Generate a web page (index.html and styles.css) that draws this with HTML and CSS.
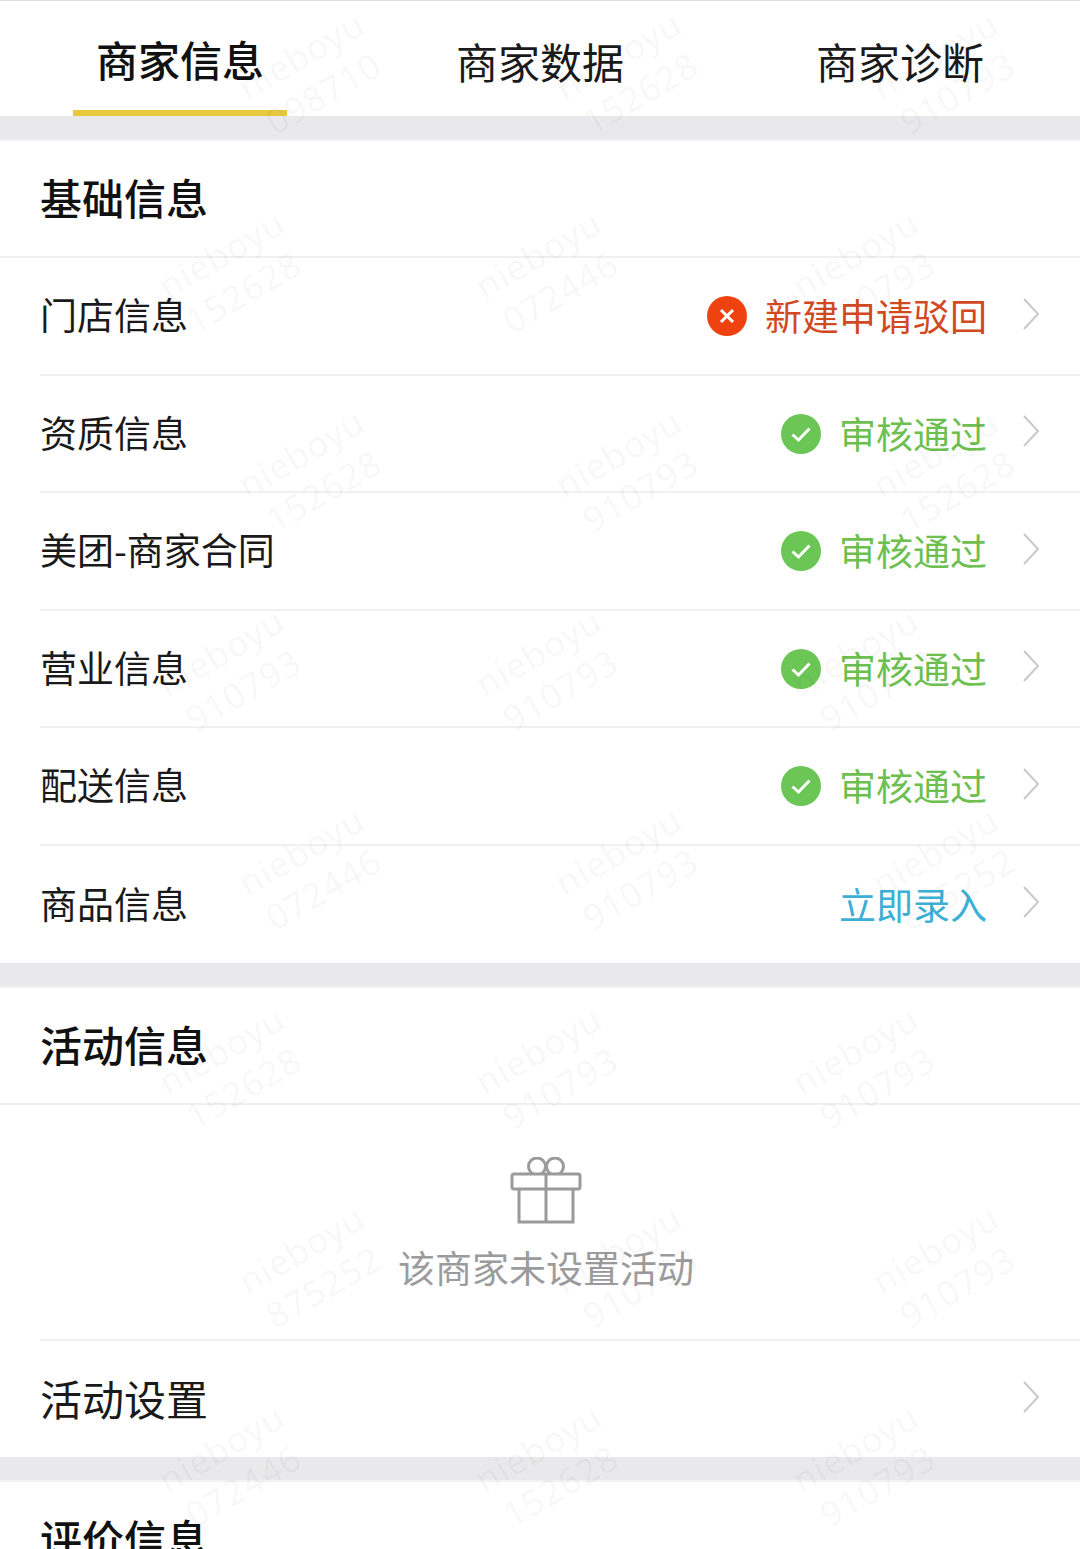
FILE: index.html
```html
<!DOCTYPE html>
<html lang="zh-CN">
  <head>
    <meta charset="UTF-8" />
    <meta name="viewport" content="width=device-width, initial-scale=1.0" />
    <title>商家信息</title>
    <link rel="stylesheet" href="styles.css">
  </head>
  <body>
    <svg display="none">
      <symbol id="chevron" viewBox="0 0 18 34">
        <path d="M2 2 L16 17 L2 32" fill="none" stroke="#c9c9cd" stroke-width="2"></path>
      </symbol>
      <symbol id="ok" viewBox="0 0 40 40">
        <circle cx="20" cy="20" r="20" fill="#6cc655"></circle>
        <path d="M11.5 20.5 L17.5 26 L28.5 14.5" fill="none" stroke="#fff" stroke-width="3"></path>
      </symbol>
      <symbol id="fail" viewBox="0 0 40 40">
        <circle cx="20" cy="20" r="20" fill="#ee4310"></circle>
        <path d="M14 14 L26 26 M26 14 L14 26" fill="none" stroke="#fff" stroke-width="3"></path>
      </symbol>
    </svg>

    <div class="page">
      <!-- tabs -->
      <div class="tabs">
        <div class="tab tab-active">商家信息</div>
        <div class="tab">商家数据</div>
        <div class="tab">商家诊断</div>
      </div>

      <!-- 基础信息 -->
      <div class="section">
        <div class="section-title">基础信息</div>
        <div class="row">
          <div class="row-label">门店信息</div>
          <svg class="status-icon"><use href="#fail"></use></svg>
          <div class="status status-red">新建申请驳回</div>
          <svg class="chevron"><use href="#chevron"></use></svg>
        </div>
        <div class="row">
          <div class="row-label">资质信息</div>
          <svg class="status-icon"><use href="#ok"></use></svg>
          <div class="status status-green">审核通过</div>
          <svg class="chevron"><use href="#chevron"></use></svg>
        </div>
        <div class="row">
          <div class="row-label">美团-商家合同</div>
          <svg class="status-icon"><use href="#ok"></use></svg>
          <div class="status status-green">审核通过</div>
          <svg class="chevron"><use href="#chevron"></use></svg>
        </div>
        <div class="row">
          <div class="row-label">营业信息</div>
          <svg class="status-icon"><use href="#ok"></use></svg>
          <div class="status status-green">审核通过</div>
          <svg class="chevron"><use href="#chevron"></use></svg>
        </div>
        <div class="row">
          <div class="row-label">配送信息</div>
          <svg class="status-icon"><use href="#ok"></use></svg>
          <div class="status status-green">审核通过</div>
          <svg class="chevron"><use href="#chevron"></use></svg>
        </div>
        <div class="row">
          <div class="row-label">商品信息</div>
          <div class="status status-blue">立即录入</div>
          <svg class="chevron"><use href="#chevron"></use></svg>
        </div>
      </div>

      <!-- 活动信息 -->
      <div class="section">
        <div class="section-title">活动信息</div>
        <div class="empty">
          <svg class="gift" viewBox="0 0 72 68" fill="none" stroke="#9a9a9c" stroke-width="3">
            <circle cx="27" cy="9.5" r="8.5"></circle>
            <circle cx="45" cy="9.5" r="8.5"></circle>
            <rect class="gift-lid" x="2" y="17" width="68" height="15" rx="2" fill="#fff"></rect>
            <path d="M9 32 V65 H63 V32 M36 17 V65"></path>
          </svg>
          <div class="empty-text">该商家未设置活动</div>
        </div>
        <div class="row row-large">
          <div class="row-label">活动设置</div>
          <svg class="chevron"><use href="#chevron"></use></svg>
        </div>
      </div>

      <!-- 评价信息 -->
      <div class="section">
        <div class="section-title">评价信息</div>
      </div>

      <!-- 水印 -->
      <div class="watermarks">
        <div class="wm-row wm-row-a">
          <div class="wm">nieboyu<br>098710</div>
          <div class="wm">nieboyu<br>152628</div>
          <div class="wm">nieboyu<br>910793</div>
        </div>
        <div class="wm-row wm-row-b">
          <div class="wm">nieboyu<br>152628</div>
          <div class="wm">nieboyu<br>072446</div>
          <div class="wm">nieboyu<br>910793</div>
        </div>
        <div class="wm-row wm-row-a">
          <div class="wm">nieboyu<br>152628</div>
          <div class="wm">nieboyu<br>910793</div>
          <div class="wm">nieboyu<br>152628</div>
        </div>
        <div class="wm-row wm-row-b">
          <div class="wm">nieboyu<br>910793</div>
          <div class="wm">nieboyu<br>910793</div>
          <div class="wm">nieboyu<br>910793</div>
        </div>
        <div class="wm-row wm-row-a">
          <div class="wm">nieboyu<br>072446</div>
          <div class="wm">nieboyu<br>910793</div>
          <div class="wm">nieboyu<br>875252</div>
        </div>
        <div class="wm-row wm-row-b">
          <div class="wm">nieboyu<br>152628</div>
          <div class="wm">nieboyu<br>910793</div>
          <div class="wm">nieboyu<br>910793</div>
        </div>
        <div class="wm-row wm-row-a">
          <div class="wm">nieboyu<br>875252</div>
          <div class="wm">nieboyu<br>910793</div>
          <div class="wm">nieboyu<br>910793</div>
        </div>
        <div class="wm-row wm-row-b">
          <div class="wm">nieboyu<br>072446</div>
          <div class="wm">nieboyu<br>152628</div>
          <div class="wm">nieboyu<br>910793</div>
        </div>
      </div>
    </div>
  </body>
</html>
```

FILE: styles.css
```css
html,
body {
  padding: 0;
  margin: 0;
  background-color: #fff;
}

body {
  color: #1a1a1a;
  font-family: "Noto Sans CJK SC", "Noto Sans", sans-serif;
}

.page {
  position: relative;
  width: 1080px;
  height: 1549px;
  overflow: hidden;
  background-color: #e9e9ec;
}

/* tabs */
.tabs {
  display: flex;
  height: 115px;
  border-top: 1px solid #dedee2;
  background-color: #fff;
}

.tab {
  position: relative;
  flex: 1;
  display: flex;
  justify-content: center;
  align-items: center;
  padding-top: 4px;
  font-size: 42px;
  line-height: 1;
}

.tab-active {
  color: #111;
  font-weight: 500;
  padding-top: 0;
}

.tab-active::after {
  content: "";
  position: absolute;
  left: 73px;
  bottom: 0;
  width: 214px;
  height: 6px;
  background-color: #e8c83f;
}

/* sections */
.section {
  margin-top: 23px;
  border-top: 2px solid #f2f2f4;
  background-color: #fff;
}

.section-title {
  display: flex;
  align-items: center;
  height: 112px;
  padding: 0 0 3px 40px;
  border-bottom: 2px solid #f0f0f2;
  color: #111;
  font-size: 42px;
  font-weight: 500;
  line-height: 1;
}

.row {
  display: flex;
  align-items: center;
  height: 115.5px;
  margin-left: 40px;
  border-bottom: 2px solid #f0f0f2;
}

.row:last-child {
  height: 117px;
  border-bottom: none;
}

.row-label {
  flex: 1;
  padding-bottom: 2px;
  font-size: 37px;
  line-height: 1;
}

.row.row-large {
  height: 116px;
  border-top: 2px solid #f0f0f2;
}

.row-large .row-label {
  font-size: 42px;
}

.status-icon {
  width: 40px;
  height: 40px;
  margin: 1px 18px 0 0;
}

.status {
  font-size: 37px;
  line-height: 1;
}

.status-red {
  color: #d2491f;
}

.status-green {
  color: #6dbf4f;
}

.status-blue {
  color: #3cafd6;
}

.chevron {
  width: 18px;
  height: 34px;
  margin: 0 40px 4px 35px;
}

/* empty state */
.empty {
  display: flex;
  flex-direction: column;
  align-items: center;
  height: 234px;
  padding: 52px 0 0 12px;
  box-sizing: border-box;
}

.gift {
  width: 72px;
  height: 68px;
}

.empty-text {
  margin-top: 24px;
  color: #9b9b9d;
  font-size: 37px;
  line-height: 1;
}

/* 水印 */
.watermarks {
  position: absolute;
  top: 0;
  left: 0;
  width: 1080px;
  pointer-events: none;
}

.wm-row {
  display: flex;
  height: 199px;
}

.wm-row-a {
  padding-left: 248px;
}

.wm-row-b {
  padding-left: 168px;
}

.wm {
  flex: none;
  width: 158px;
  margin-right: 159px;
  padding-top: 26px;
  color: rgba(0, 0, 0, 0.04);
  font-family: "Noto Sans", sans-serif;
  font-size: 35px;
  line-height: 44px;
  letter-spacing: 1px;
  text-align: center;
  transform: rotate(-30deg);
}
```
